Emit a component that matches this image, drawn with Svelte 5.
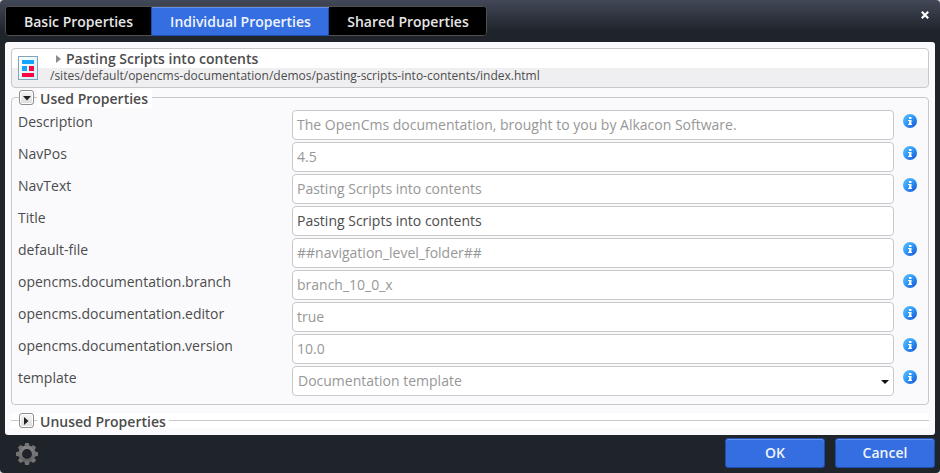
<script>
  const tabs = ['Basic Properties', 'Individual Properties', 'Shared Properties'];
  let active = $state(1);
  const fields = [
    { name: 'Description', value: 'The OpenCms documentation, brought to you by Alkacon Software.', info: true },
    { name: 'NavPos', value: '4.5', info: true },
    { name: 'NavText', value: 'Pasting Scripts into contents', info: true },
    { name: 'Title', value: 'Pasting Scripts into contents', own: true },
    { name: 'default-file', value: '##navigation_level_folder##', info: true },
    { name: 'opencms.documentation.branch', value: 'branch_10_0_x', info: true },
    { name: 'opencms.documentation.editor', value: 'true', info: true },
    { name: 'opencms.documentation.version', value: '10.0', info: true },
    { name: 'template', value: 'Documentation template', info: true, select: true }
  ];
</script>

<div class="dialog">
  <header>
    <nav>
      {#each tabs as tab, i}
        <button class="tab t{i}" class:active={active === i} onclick={() => (active = i)}>{tab}</button>
      {/each}
    </nav>
    <svg class="close" width="8" height="8" viewBox="0 0 8 8" aria-label="Close"><path d="M.8 .8L7.2 7.2M7.2 .8L.8 7.2" stroke="#fff" stroke-width="2.2" /></svg>
  </header>

  <main>
    <section class="resource">
      <svg class="pageicon" width="20" height="24" viewBox="0 0 20 24" shape-rendering="crispEdges">
        <defs><linearGradient id="paper" x2="1" y2="1"><stop stop-color="#fff" /><stop offset="1" stop-color="#d4edf9" /></linearGradient></defs>
        <rect x=".5" y=".5" width="19" height="23" fill="url(#paper)" stroke="#82a3b4" />
        <path fill="#12a5fb" d="M4 4h12v4H4zM4 10h5v5H4z" />
        <path fill="#fb0542" d="M11 10h5v5h-5zM4 17h12v4H4z" />
      </svg>
      <div class="lines">
        <div class="name"><svg width="5" height="8" viewBox="0 0 5 8"><path d="M0 0L5 4L0 8Z" fill="#8c8c8c" /></svg><span>Pasting Scripts into contents</span></div>
        <div class="path">/sites/default/opencms-documentation/demos/pasting-scripts-into-contents/index.html</div>
      </div>
    </section>

    <section class="group">
      <div class="legend">
        <button class="toggle open" aria-label="Collapse"><svg width="8" height="5" viewBox="0 0 8 5"><path d="M0 0H8L4 4.5Z" fill="#222" /></svg></button>
        <span>Used Properties</span>
      </div>
      <div class="rows">
        {#each fields as f}
          <div class="row">
            <div class="label">{f.name}</div>
            <div class="input" class:own={f.own} class:select={f.select}>
              <span>{f.value}</span>
              {#if f.select}<svg width="8" height="4" viewBox="0 0 8 4"><path d="M0 0H8L4 4Z" fill="#111" /></svg>{/if}
            </div>
            {#if f.info}
              <svg class="info" width="14" height="14" viewBox="0 0 14 14">
                <defs><linearGradient id="ball" x2="1" y2="1"><stop offset=".1" stop-color="#55bdff" /><stop offset=".5" stop-color="#2c95fb" /><stop offset=".9" stop-color="#1a5fd6" /></linearGradient></defs>
                <circle cx="7" cy="7" r="7" fill="url(#ball)" />
                <path fill="#fff" d="M6 3h2.5v2H6zM5 6h3.5v4H9v1H5v-1h1V7H5z" />
              </svg>
            {/if}
          </div>
        {/each}
      </div>
    </section>

    <section class="unused">
      <i class="start"></i>
      <button class="toggle" aria-label="Expand"><svg width="5" height="8" viewBox="0 0 5 8"><path d="M0 0L4.5 4L0 8Z" fill="#222" /></svg></button>
      <i class="gap"></i>
      <span>Unused Properties</span>
      <i class="rest"></i>
    </section>
  </main>

  <footer>
    <svg class="gear" width="22" height="22" viewBox="-11 -11 22 22">
      <defs><linearGradient id="metal" x2="0" y2="1"><stop stop-color="#858585" /><stop offset="1" stop-color="#626262" /></linearGradient></defs>
      <circle r="6.7" fill="none" stroke="url(#metal)" stroke-width="3.6" />
      {#each [0, 45, 90, 135, 180, 225, 270, 315] as a}
        <path transform="rotate({a})" d="M-2.7 -7.5L-1.8 -11H1.8L2.7 -7.5Z" fill="#747474" />
      {/each}
    </svg>
    <div class="actions"><button>OK</button><button>Cancel</button></div>
  </footer>
</div>

<style>
  :global(body) { margin: 0; background: #ddd; }
  .dialog, .dialog * { box-sizing: border-box; }
  .dialog {
    width: 940px; height: 473px; display: flex; flex-direction: column; overflow: hidden;
    border-radius: 4px; background: linear-gradient(#424857 0, #1f242b 31px);
    font: 14px/20px "Open Sans", sans-serif; color: #4c4c4c;
  }
  svg { display: block; flex: none; }
  button { font: inherit; padding: 0; margin: 0; }
  header { height: 42px; flex: none; display: flex; justify-content: space-between; padding: 6px 11px 0 5px; }
  nav { display: flex; height: 30px; border: 1px solid #505050; border-radius: 4px; background: #000; }
  .tab { border: 0; background: #000; color: #e6e6e6; font-weight: 600; height: 28px; line-height: 28px; padding-top: 1px; }
  .t0 { width: 146px; padding-right: 1px; border-radius: 3px 0 0 3px; }
  .t1 { width: 177px; }
  .t2 { width: 157px; padding-left: 1px; border-radius: 0 3px 3px 0; }
  .tab.active { background: #356ee1; box-shadow: inset 0 1px #6792ec, -1px 0 #1e4fae, inset -1px 0 #1e4fae, 0 1px #1e4fae; color: #f0f4fc; }
  .close { margin-top: 5px; }
  main { height: 393px; flex: none; margin: 0 5px; padding: 6px; background: #fafafc; border-radius: 3px; display: flex; flex-direction: column; }
  .resource { height: 40px; flex: none; border: 1px solid #c8c8ca; border-radius: 4px; background: linear-gradient(#fff 19px, #efeff1 19px); display: flex; padding: 0 6px; }
  .pageicon { margin-top: 7px; }
  .lines { margin-left: 12px; }
  .name { height: 19px; display: flex; align-items: center; padding-left: 6px; font-weight: 600; gap: 5px; }
  .path { font-size: 12px; line-height: 15px; white-space: nowrap; }
  .group { position: relative; height: 308px; flex: none; margin-top: 9px; border: 1px solid #c8c8ca; border-radius: 4px; padding-top: 12px; }
  .legend { position: absolute; top: -8px; left: 7px; height: 18px; display: flex; font-weight: 600; }
  .legend span { margin-left: 3px; padding: 0 4px 0 3px; line-height: 18px; background: #fff; }
  .toggle { width: 15px; height: 15px; flex: none; border: 1px solid #8e8e8e; border-radius: 3px; background: linear-gradient(#f6f6f6, #dcdcdc); box-shadow: inset 0 0 0 1px #fff; display: flex; align-items: center; justify-content: center; }
  .toggle.open { padding-top: 1px; }
  .row { display: flex; height: 32px; padding-left: 6px; }
  .label { width: 274px; height: 24px; line-height: 24px; }
  .input { width: 602px; height: 30px; border: 1px solid #c8c8ca; border-radius: 4px; background: #fff; color: #979797; padding: 0 4px; line-height: 28px; display: flex; align-items: center; justify-content: space-between; }
  .input.own { color: #4c4c4c; }
  .input.select { padding-left: 5px; }
  .input.select svg { margin-top: 2px; }
  .info { margin: 4px 0 0 9px; }
  .unused { display: flex; height: 15px; margin-top: 8px; font-weight: 600; background: #fff; }
  .unused i { height: 1px; margin-top: 7px; background: #c8c8ca; }
  .start { width: 8px; }
  .gap { width: 3px; }
  .unused span { margin-left: 3px; margin-right: 3px; line-height: 18px; }
  .rest { flex: 1; }
  footer { flex: 1; display: flex; justify-content: space-between; padding: 3px 5px 0 16px; }
  .gear { margin-top: 5px; }
  .actions { display: flex; gap: 10px; }
  .actions button { width: 100px; height: 30px; border: 1px solid #1e4fae; border-radius: 3px; background: #356ee1; box-shadow: inset 0 1px #6792ec; color: #f0f4fc; font-weight: 600; }
</style>
